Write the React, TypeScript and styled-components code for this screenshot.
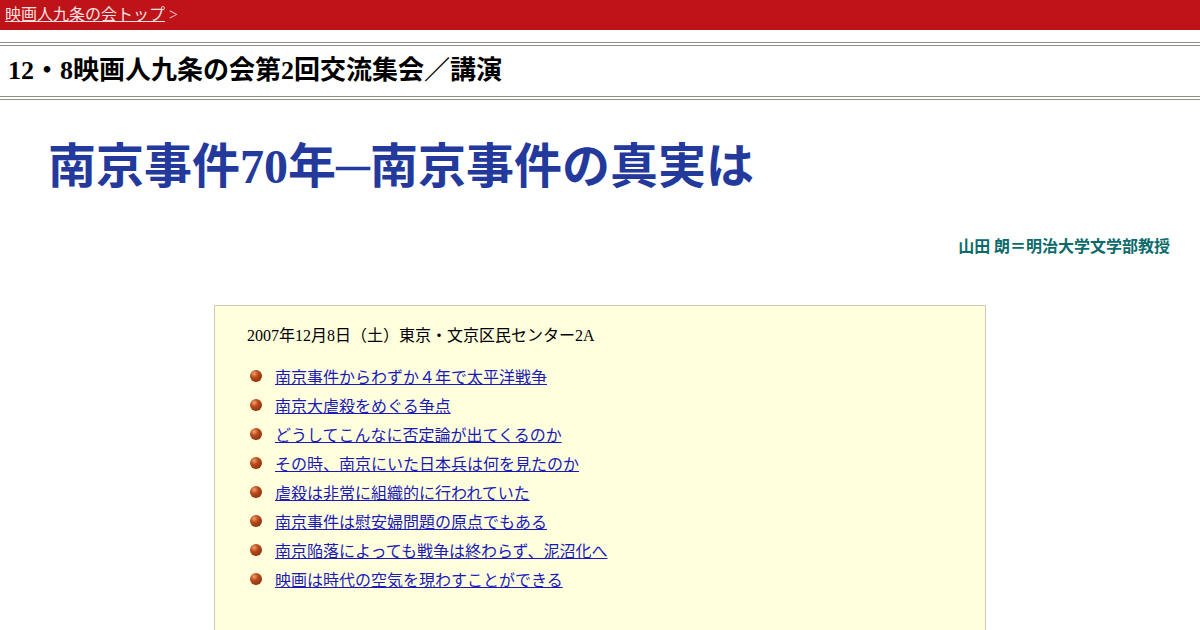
import * as React from 'react'
import styled, { createGlobalStyle } from 'styled-components'

const GlobalStyle = createGlobalStyle`
  body {
    margin: 0;
    background: #ffffff;
    font-family: 'Liberation Serif', 'Noto Sans CJK JP', serif;
    color: #000000;
  }
`

const topics = [
  '南京事件からわずか４年で太平洋戦争',
  '南京大虐殺をめぐる争点',
  'どうしてこんなに否定論が出てくるのか',
  'その時、南京にいた日本兵は何を見たのか',
  '虐殺は非常に組織的に行われていた',
  '南京事件は慰安婦問題の原点でもある',
  '南京陥落によっても戦争は終わらず、泥沼化へ',
  '映画は時代の空気を現わすことができる'
]

const TopBar = styled.div`
  height: 30px;
  margin-bottom: 12px;
  background: #be1318;
  color: #f4d0d0;
  font-size: 16px;
  line-height: 29px;
  padding-left: 5px;
`

const TopLink = styled.a`
  color: #f7e0e0;
  text-decoration: underline;
`

const DoubleRule = styled.div`
  height: 2px;
  border-top: 1px solid #8f8f86;
  border-bottom: 1px solid #8f8f86;
`

const PageHeading = styled.h1`
  margin: 0;
  padding: 0 8px;
  height: 50px;
  font-size: 26px;
  font-weight: bold;
  line-height: 50px;
`

const Title = styled.h2`
  margin: 32px 0 0;
  padding-left: 48px;
  font-size: 48px;
  font-weight: bold;
  line-height: 70px;
  color: #233a9c;
`

const Author = styled.p`
  margin: 31px 30px 0 0;
  text-align: right;
  font-family: 'Noto Sans CJK JP', sans-serif;
  font-size: 16px;
  font-weight: bold;
  color: #0b6b6b;
`

const InfoBox = styled.div`
  width: 722px;
  margin: 48px auto 0;
  padding: 16px 16px 40px 32px;
  background: #ffffdd;
  border: 1px solid #cfcab0;
  min-height: 300px;
`

const DateLine = styled.p`
  margin: 0;
  font-size: 16px;
  line-height: 28px;
`

const TopicList = styled.ul`
  list-style: none;
  margin: 11px 0 0;
  padding: 0;
`

const TopicItem = styled.li`
  display: flex;
  align-items: center;
  gap: 13px;
  height: 29px;
  font-size: 16px;
`

const Bullet = styled.span`
  width: 12px;
  height: 12px;
  margin-left: 3px;
  border-radius: 50%;
  background: radial-gradient(circle at 35% 30%, #f0a070 0%, #b84a1c 35%, #7a2408 100%);
  flex-shrink: 0;
`

const TopicLink = styled.a`
  color: #1a1ab8;
  text-decoration: underline;
`

export default function App() {
  return (
    <>
      <GlobalStyle />
      <TopBar>
        <TopLink href="#">映画人九条の会トップ</TopLink> &gt;
      </TopBar>
      <DoubleRule />
      <PageHeading>12・8映画人九条の会第2回交流集会／講演</PageHeading>
      <DoubleRule />
      <Title>南京事件70年─南京事件の真実は</Title>
      <Author>山田 朗＝明治大学文学部教授</Author>
      <InfoBox>
        <DateLine>2007年12月8日（土）東京・文京区民センター2A</DateLine>
        <TopicList>
          {topics.map((t) => (
            <TopicItem key={t}>
              <Bullet />
              <TopicLink href="#">{t}</TopicLink>
            </TopicItem>
          ))}
        </TopicList>
      </InfoBox>
    </>
  )
}
